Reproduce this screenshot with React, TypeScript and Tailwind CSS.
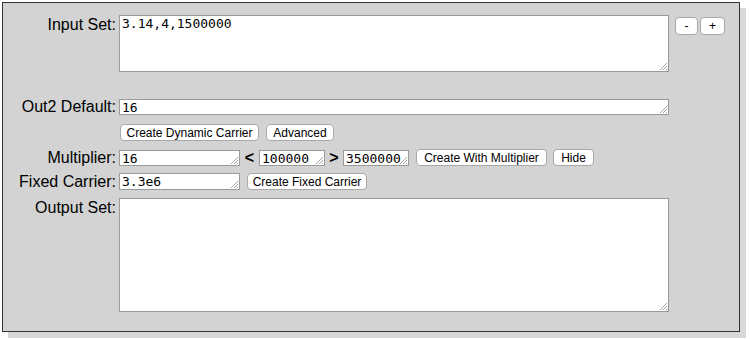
import React from 'react';

// Small diagonal grip drawn over the textarea's bottom-right corner
function Grip() {
  return (
    <svg
      className="pointer-events-none absolute bottom-[1px] right-[1px]"
      width="10"
      height="10"
      viewBox="0 0 10 10"
    >
      <path d="M9 2 L2 9 M9 5 L5 9 M9 8 L8 9" stroke="#a8a8a8" strokeWidth="1" fill="none" />
    </svg>
  );
}

function Area({ value = '', className }: { value?: string; className: string }) {
  return (
    <div className={`relative shrink-0 ${className}`}>
      <textarea
        defaultValue={value}
        spellCheck={false}
        className="block h-full w-full resize-none overflow-hidden border border-[#9a9a9a] bg-white px-[2px] pt-[1px] text-[13px] leading-[14px] text-black outline-none [font-family:'DejaVu_Sans_Mono',monospace]"
      />
      <Grip />
    </div>
  );
}

function Btn({ label, className }: { label: string; className: string }) {
  return (
    <button
      type="button"
      className={`flex shrink-0 items-center justify-center rounded-[4px] border border-[#a9a9a9] bg-white text-[12px] leading-none text-black [font-family:'Liberation_Sans',Arial,sans-serif] ${className}`}
    >
      {label}
    </button>
  );
}

function Label({ text }: { text: string }) {
  return (
    <div className="w-[116px] shrink-0 pr-[3px] text-right text-[16px] leading-[16px] text-black">
      {text}
    </div>
  );
}

export default function App() {
  return (
    <div className="min-h-screen bg-white p-[2px] [font-family:'Liberation_Sans',Arial,sans-serif]">
      <div className="w-[738px] border border-[#333] bg-[#d3d3d3] pb-[19px] pt-[12px] shadow-[6px_6px_0_#d8d8d8]">
        {/* Input Set */}
        <div className="flex items-start">
          <div className="pt-[2px]">
            <Label text="Input Set:" />
          </div>
          <Area value="3.14,4,1500000" className="h-[57px] w-[550px]" />
          <div className="ml-[6px] mt-[2px] flex gap-[2px]">
            <Btn label="-" className="h-[18px] w-[23px]" />
            <Btn label="+" className="h-[18px] w-[25px]" />
          </div>
        </div>

        {/* Out2 Default */}
        <div className="mt-[27px] flex items-center">
          <Label text="Out2 Default:" />
          <Area value="16" className="h-[16px] w-[550px]" />
        </div>

        <div className="ml-[117px] mt-[9px] flex gap-[7px]">
          <Btn label="Create Dynamic Carrier" className="h-[17px] w-[139px]" />
          <Btn label="Advanced" className="h-[17px] w-[68px]" />
        </div>

        {/* Multiplier */}
        <div className="mt-[8px] flex items-center">
          <Label text="Multiplier:" />
          <Area value="16" className="h-[16px] w-[121px]" />
          <span className="w-[19px] text-center text-[16px] font-bold leading-[16px]">&lt;</span>
          <Area value="100000" className="h-[16px] w-[66px]" />
          <span className="w-[18px] text-center text-[16px] font-bold leading-[16px]">&gt;</span>
          <Area value="3500000" className="h-[16px] w-[66px]" />
          <Btn label="Create With Multiplier" className="ml-[7px] h-[17px] w-[131px]" />
          <Btn label="Hide" className="ml-[6px] h-[17px] w-[41px]" />
        </div>

        {/* Fixed Carrier */}
        <div className="mt-[7px] flex items-center">
          <Label text="Fixed Carrier:" />
          <Area value="3.3e6" className="h-[17px] w-[121px]" />
          <Btn label="Create Fixed Carrier" className="ml-[7px] h-[17px] w-[120px]" />
        </div>

        {/* Output Set */}
        <div className="mt-[8px] flex items-start">
          <div className="pt-[2px]">
            <Label text="Output Set:" />
          </div>
          <Area className="h-[114px] w-[550px]" />
        </div>
      </div>
    </div>
  );
}
